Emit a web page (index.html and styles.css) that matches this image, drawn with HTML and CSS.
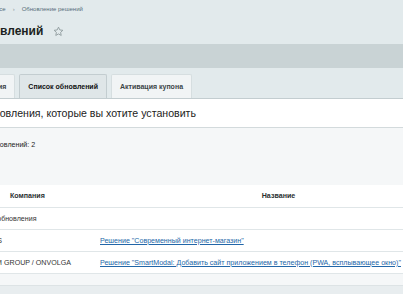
FILE: index.html
```html
<!DOCTYPE html>
<html lang="ru">
<head>
<meta charset="utf-8">
<title>Список обновлений</title>
<link rel="stylesheet" href="styles.css">
</head>
<body>
<div class="viewport">
  <div class="page">
    <div class="crumbs">
      <a class="crumb" href="#">Marketplace</a>
      <span class="sep">›</span>
      <a class="crumb" href="#">Обновление решений</a>
    </div>
    <div class="titlebar">
      <h1 class="title">Список обновлений</h1>
      <svg class="star" width="11" height="11" viewBox="0 0 24 24"><path d="M12 2.5l2.9 6.1 6.6.8-4.9 4.6 1.3 6.6L12 17.3l-5.9 3.3 1.3-6.6-4.9-4.6 6.6-.8z" fill="none" stroke="#8f9b9e" stroke-width="2" stroke-linejoin="round"/></svg>
    </div>
    <div class="toolbar"></div>
    <div class="tabs">
      <div class="tab">Обновления</div>
      <div class="tab tab-active">Список обновлений</div>
      <div class="tab">Активация купона</div>
    </div>
    <div class="panel">
      <div class="panel-head">Выберите обновления, которые вы хотите установить</div>
      <div class="info">Доступно обновлений: 2</div>
      <table class="grid">
        <colgroup><col class="c-check"><col class="c-company"><col class="c-name"></colgroup>
        <thead>
          <tr><th></th><th class="th-company">Компания</th><th class="th-name">Название</th></tr>
        </thead>
        <tbody>
          <tr class="group"><td></td><td colspan="2">Все обновления</td></tr>
          <tr><td></td><td>ITS</td><td><a href="#">Решение "Современный интернет-магазин"</a></td></tr>
          <tr><td></td><td>DM GROUP / ONVOLGA</td><td><a href="#">Решение "SmartModal: Добавить сайт приложением в телефон (PWA, всплывающее окно)"</a></td></tr>
          <tr class="tfoot"><td colspan="3"></td></tr>
        </tbody>
      </table>
      <div class="bottom"></div>
    </div>
  </div>
</div>
</body>
</html>
```

FILE: styles.css
```css
html, body {
  margin: 0;
  padding: 0;
  background: #e2eaec;
}
.viewport {
  width: 403px;
  height: 294px;
  overflow: hidden;
}
.page {
  margin-left: -100px;
  width: 620px;
  font-family: "Liberation Sans", Arial, sans-serif;
  color: #222;
}
.crumbs {
  height: 18px;
  display: flex;
  align-items: center;
  gap: 7px;
  padding-left: 73px;
  font-size: 6px;
}
.crumb {
  color: #566d7a;
  text-decoration: none;
}
.sep {
  color: #8a979c;
  font-size: 6px;
}
.titlebar {
  height: 26px;
  display: flex;
  align-items: center;
  gap: 10px;
  padding-left: 24px;
}
.title {
  margin: 0;
  font-size: 12px;
  font-weight: bold;
  color: #1b1f21;
}
.star {
  display: block;
}
.toolbar {
  height: 24px;
  background: #c9d3d5;
}
.tabs {
  display: flex;
  gap: 4px;
  margin-top: 6px;
  padding-left: 54px;
  align-items: flex-end;
}
.tab {
  height: 24px;
  box-sizing: border-box;
  padding: 0 8px;
  display: flex;
  align-items: center;
  font-size: 7px;
  font-weight: bold;
  color: #3c4447;
  background: #f1f4f5;
  border: 1px solid #d6dee0;
  border-bottom: 0;
  border-radius: 2px 2px 0 0;
}
.tab-active {
  background: #dfe6e8;
  border-color: #c3cdd0;
  color: #111;
}
.panel {
  background: #fff;
  border-top: 1px solid #c3cdd0;
}
.panel-head {
  height: 28px;
  display: flex;
  align-items: center;
  padding-left: 30px;
  font-size: 10.6px;
  color: #222;
  border-bottom: 1px solid #d3dadc;
}
.info {
  height: 57px;
  box-sizing: border-box;
  padding: 13px 0 0 55px;
  font-size: 7.1px;
  background: #f5f7f8;
  color: #222;
}
.grid {
  border-collapse: collapse;
  table-layout: fixed;
  width: 557px;
  font-size: 7.1px;
}
.c-check { width: 80px; }
.c-company { width: 115px; }
.c-name { width: 362px; }
.grid th, .grid td {
  height: 21px;
  padding: 0 0 0 11px;
  border-bottom: 1px solid #e0e6e8;
  text-align: left;
  white-space: nowrap;
  color: #333;
}
.grid th {
  font-weight: bold;
  height: 22px;
  color: #2a2f31;
}
.grid .group td { padding-left: 3px; }
.grid td:nth-child(3) { padding-left: 5px; }
.grid .th-company { padding-left: 30px; }
.grid .th-name { text-align: center; padding-left: 5px; }
.grid a {
  color: #2266a8;
  text-decoration: underline;
}
.grid .tfoot td {
  height: 11px;
  background: #f5f7f8;
  border-bottom: 1px solid #dde3e5;
}
.bottom {
  height: 10px;
  background: #e8edef;
}
```
